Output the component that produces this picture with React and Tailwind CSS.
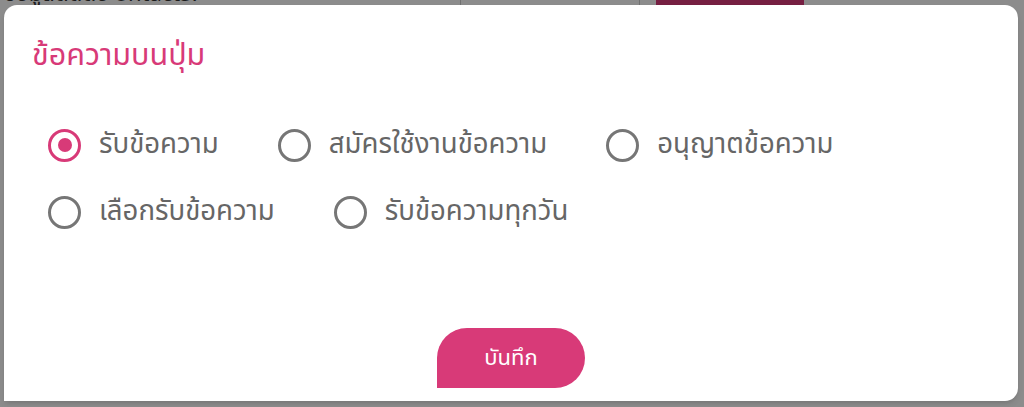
import { useState } from 'react';

const OPTIONS = [
  { id: 'receive', label: 'รับข้อความ' },
  { id: 'subscribe', label: 'สมัครใช้งานข้อความ' },
  { id: 'allow', label: 'อนุญาตข้อความ' },
  { id: 'choose', label: 'เลือกรับข้อความ' },
  { id: 'daily', label: 'รับข้อความทุกวัน' },
];

const font = { fontFamily: '"Noto Sans Thai", "Noto Sans", "Liberation Sans", sans-serif' };

function Radio({ checked, label, onClick }) {
  return (
    <button onClick={onClick} className="flex items-center gap-[18px] h-8">
      <span
        className={`flex items-center justify-center w-[33px] h-[33px] rounded-full border-[3px] ${checked ? 'border-[#d83a78]' : 'border-[#767676]'}`}
      >
        {checked && <span className="w-[14px] h-[14px] rounded-full bg-[#d83a78]" />}
      </span>
      <span className="text-[27.6px] leading-8 text-[#666666]">{label}</span>
    </button>
  );
}

export default function App() {
  const [value, setValue] = useState('receive');

  return (
    <div className="relative w-[1024px] h-[407px] overflow-hidden bg-white" style={font}>
      {/* page behind the dialog */}
      <div className="flex items-end h-[28px] -mt-[22px] text-[22px] text-[#333]">
        <div className="w-[460px] pl-1 leading-none">ข้อมูลติดต่อ ontacts?</div>
        <div className="w-[180px] h-full border-x border-[#ccc] text-center leading-none">ทั้งหมด</div>
        <div className="ml-4 w-[148px] h-full bg-[#d83a78] text-white text-center leading-none">ค้นหา</div>
      </div>

      <div className="absolute inset-0 bg-black/45">
        <div className="mt-[5px] ml-[4px] w-[1014px] h-[396px] bg-white rounded-t-[13px] rounded-br-[13px] flex flex-col px-7 pt-[35px] pb-[13px] shadow-md">
          <h2 className="text-[30.5px] leading-8 text-[#d83a78]">ข้อความบนปุ่ม</h2>

          <div className="mt-[57px] ml-4 flex flex-wrap gap-x-[59px] gap-y-[35px] pr-10">
            {OPTIONS.map((o) => (
              <Radio key={o.id} label={o.label} checked={value === o.id} onClick={() => setValue(o.id)} />
            ))}
          </div>

          <div className="mt-auto flex justify-center">
            <button className="w-[148px] h-[60px] rounded-[30px] rounded-bl-none bg-[#d83a78] text-white text-[22px]">
              บันทึก
            </button>
          </div>
        </div>
      </div>
    </div>
  );
}
